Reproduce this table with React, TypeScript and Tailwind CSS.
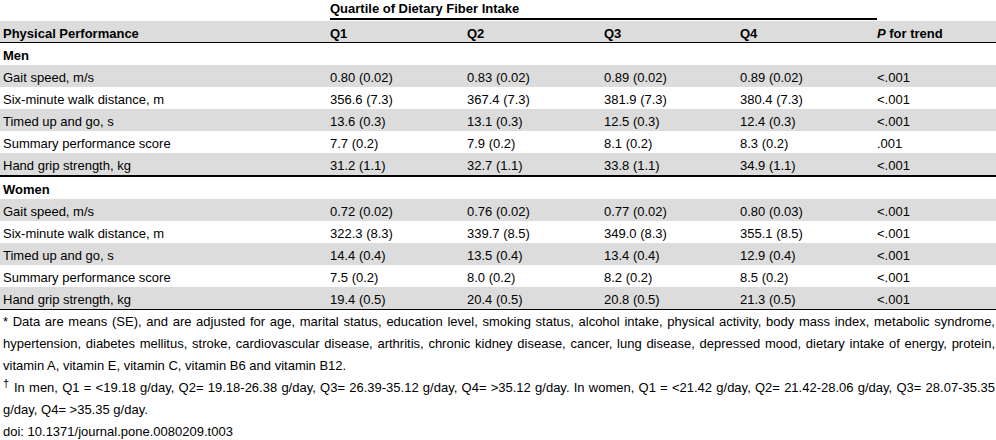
import React from "react";

type Row = { label: string; values: string[]; p: string };

const men: Row[] = [
	{ label: "Gait speed, m/s", values: ["0.80 (0.02)", "0.83 (0.02)", "0.89 (0.02)", "0.89 (0.02)"], p: "<.001" },
	{ label: "Six-minute walk distance, m", values: ["356.6 (7.3)", "367.4 (7.3)", "381.9 (7.3)", "380.4 (7.3)"], p: "<.001" },
	{ label: "Timed up and go, s", values: ["13.6 (0.3)", "13.1 (0.3)", "12.5 (0.3)", "12.4 (0.3)"], p: "<.001" },
	{ label: "Summary performance score", values: ["7.7 (0.2)", "7.9 (0.2)", "8.1 (0.2)", "8.3 (0.2)"], p: ".001" },
	{ label: "Hand grip strength, kg", values: ["31.2 (1.1)", "32.7 (1.1)", "33.8 (1.1)", "34.9 (1.1)"], p: "<.001" },
];

const women: Row[] = [
	{ label: "Gait speed, m/s", values: ["0.72 (0.02)", "0.76 (0.02)", "0.77 (0.02)", "0.80 (0.03)"], p: "<.001" },
	{ label: "Six-minute walk distance, m", values: ["322.3 (8.3)", "339.7 (8.5)", "349.0 (8.3)", "355.1 (8.5)"], p: "<.001" },
	{ label: "Timed up and go, s", values: ["14.4 (0.4)", "13.5 (0.4)", "13.4 (0.4)", "12.9 (0.4)"], p: "<.001" },
	{ label: "Summary performance score", values: ["7.5 (0.2)", "8.0 (0.2)", "8.2 (0.2)", "8.5 (0.2)"], p: "<.001" },
	{ label: "Hand grip strength, kg", values: ["19.4 (0.5)", "20.4 (0.5)", "20.8 (0.5)", "21.3 (0.5)"], p: "<.001" },
];

const grid = "grid grid-cols-[327px_137px_137px_136px_137px_1fr]";

const DataRows = ({ rows }: { rows: Row[] }) => (
	<>
		{rows.map((r, i) => (
			<div key={r.label} className={`${grid} h-[22px] pt-[3px] items-center ${i % 2 === 0 ? "bg-[#dcdcdc]" : "bg-white"}`}>
				<div className="pl-[3px]">{r.label}</div>
				{r.values.map((v, j) => (
					<div key={j} className="pl-[3px]">
						{v}
					</div>
				))}
				<div className="pl-[3px]">{r.p}</div>
			</div>
		))}
	</>
);

const SectionRow = ({ title }: { title: string }) => (
	<div className="h-[22px] pt-[3px] flex items-center pl-[3px] font-bold">{title}</div>
);

export default function App() {
	return (
		<div className="w-[996px] h-[440px] bg-white text-black text-[13px] leading-none font-['Liberation_Sans',Arial,sans-serif]">
			<div className={`${grid} h-[21px]`}>
				<div />
				<div className="col-span-4 ml-[3px] -mr-[3px] h-[20px] pb-[2px] border-b-2 border-black font-bold flex items-center">
					Quartile of Dietary Fiber Intake
				</div>
			</div>
			<div className={`${grid} h-[22px] pt-[3px] items-center bg-[#dcdcdc] border-b border-black font-bold`}>
				<div className="pl-[3px]">Physical Performance</div>
				<div className="pl-[3px]">Q1</div>
				<div className="pl-[3px]">Q2</div>
				<div className="pl-[3px]">Q3</div>
				<div className="pl-[3px]">Q4</div>
				<div className="pl-[3px]">
					<i>P</i> for trend
				</div>
			</div>
			<SectionRow title="Men" />
			<DataRows rows={men} />
			<div className="border-b-2 border-black" />
			<SectionRow title="Women" />
			<DataRows rows={women} />
			<div className="border-b border-black" />
			<div className="pl-[3px] pr-[1px] pt-[1px] leading-[22px]">
				<div className="text-justify [text-align-last:justify]">
					* Data are means (SE), and are adjusted for age, marital status, education level, smoking status, alcohol intake, physical activity, body mass index, metabolic syndrome,
				</div>
				<div className="text-justify [text-align-last:justify]">
					hypertension, diabetes mellitus, stroke, cardiovascular disease, arthritis, chronic kidney disease, cancer, lung disease, depressed mood, dietary intake of energy, protein,
				</div>
				<div>vitamin A, vitamin E, vitamin C, vitamin B6 and vitamin B12.</div>
				<div className="text-justify [text-align-last:justify]">
					<sup className="text-[11px]">†</sup> In men, Q1 = &lt;19.18 g/day, Q2= 19.18-26.38 g/day, Q3= 26.39-35.12 g/day, Q4= &gt;35.12 g/day. In women, Q1 = &lt;21.42 g/day, Q2= 21.42-28.06 g/day, Q3= 28.07-35.35
				</div>
				<div>g/day, Q4= &gt;35.35 g/day.</div>
				<div>doi: 10.1371/journal.pone.0080209.t003</div>
			</div>
		</div>
	);
}
